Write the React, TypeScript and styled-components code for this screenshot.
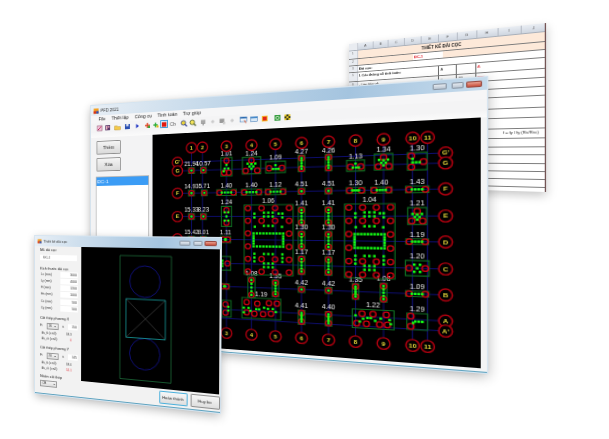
import React from "react";
import styled, { createGlobalStyle } from "styled-components";

type Pt = [number, number];

// panes are laid out at twice their on-screen size, then zoomed by half and tilted
const ZOOM = 0.5;

const makeQuad = (w: number, h: number, [p0, p1, p2, p3]: Pt[]) => {
  const dx1 = p1[0] - p2[0], dx2 = p3[0] - p2[0], sx = p0[0] - p1[0] + p2[0] - p3[0];
  const dy1 = p1[1] - p2[1], dy2 = p3[1] - p2[1], sy = p0[1] - p1[1] + p2[1] - p3[1];
  const den = dx1 * dy2 - dx2 * dy1;
  const g = (sx * dy2 - dx2 * sy) / den, k = (dx1 * sy - sx * dy1) / den;
  const a = p1[0] - p0[0] + g * p1[0], b = p3[0] - p0[0] + k * p3[0], c = p0[0];
  const d = p1[1] - p0[1] + g * p1[1], e = p3[1] - p0[1] + k * p3[1], f = p0[1];
  const mw = w * ZOOM, mh = h * ZOOM;
  const matrix = `matrix3d(${[a / mw, d / mw, 0, g / mw, b / mh, e / mh, 0, k / mh, 0, 0, 1, 0, c, f, 0, 1].join(",")})`;
  const unproject = (X: number, Y: number): Pt => {
    const uu = (e - f * k) * X + (c * k - b) * Y + (b * f - c * e);
    const vv = (f * g - d) * X + (a - c * g) * Y + (c * d - a * f);
    const ww = (d * k - e * g) * X + (b * g - a * k) * Y + (a * e - b * d);
    return [(uu / ww) * w, (vv / ww) * h];
  };
  return { matrix, unproject };
};

const sheetQuad = makeQuad(400, 340, [[349, 44], [546, 23], [546, 192], [349, 186]]);
const mainQuad = makeQuad(800, 560, [[91, 106], [487, 77], [487, 373], [91, 342]]);
const dialogQuad = makeQuad(400, 340, [[35, 236], [221, 238], [220, 413], [35, 393]]);

const GlobalStyle = createGlobalStyle`
  html, body { margin: 0; background: #fff; }
  body { font-family: "Liberation Sans", Arial, sans-serif; }
`;

const Stage = styled.div`
  position: relative;
  width: 609px;
  height: 439px;
  overflow: hidden;
  background: #fff;
`;

const Tilt = styled.div`
  position: absolute;
  left: 0;
  top: 0;
  transform-origin: 0 0;
`;

const Pane = styled.div<{ $w: number; $h: number }>`
  zoom: ${ZOOM};
  width: ${(p) => p.$w}px;
  height: ${(p) => p.$h}px;
  box-sizing: border-box;
  display: flex;
  flex-direction: column;
`;

/* spreadsheet */
const SheetPane = styled(Pane)`
  background: #fff;
  box-shadow: 0 8px 18px rgba(0, 0, 0, 0.22);
  border-right: 1.5px solid #6b4a4a;
  font-size: 8px;
  color: #222;
  overflow: hidden;
`;
const SheetRow = styled.div<{ $h: number; $bg?: string }>`
  display: flex;
  height: ${(p) => p.$h}px;
  flex: none;
  background: ${(p) => p.$bg || "transparent"};
  border-bottom: 1.6px solid #7c7c7c;
  box-sizing: border-box;
`;
const HeaderRow = styled.div`
  display: flex;
  height: 15px;
  flex: none;
  background: linear-gradient(#e9edf3, #cfd6e0);
  border-bottom: 1px solid #a9b0ba;
`;
const RowHead = styled.div`
  width: 19px;
  flex: none;
  background: #e9ecf1;
  border-right: 1px solid #c2c6d0;
  color: #666;
  font-size: 7px;
  text-align: center;
  line-height: 14px;
`;
const ColHead = styled.div<{ $w: number }>`
  width: ${(p) => p.$w}px;
  flex: none;
  text-align: center;
  color: #555;
  font-size: 8px;
  line-height: 15px;
  border-right: 1px solid #b6bcc6;
  box-sizing: border-box;
`;
const Cell = styled.div<{ $w: number; $red?: boolean; $bold?: boolean; $line?: boolean }>`
  width: ${(p) => p.$w}px;
  flex: none;
  padding-left: 3px;
  box-sizing: border-box;
  white-space: nowrap;
  line-height: 14px;
  color: ${(p) => (p.$red ? "#e0101a" : "#222")};
  font-weight: ${(p) => (p.$bold ? 700 : 400)};
  border-right: ${(p) => (p.$line ? "1px solid #666" : "none")};
  background: ${(p) => (p.$red && p.$bold ? "#fff" : "transparent")};
`;
const SheetTitle = styled.div`
  flex: 1;
  text-align: center;
  font-weight: 700;
  font-size: 9px;
  line-height: 19px;
  padding-right: 10px;
`;

const Sheet = () => {
  const cols = [37, 34, 36, 36, 36, 37, 38, 40, 42, 45];
  const letters = "ABCDEFGHIJ".split("");
  return (
    <Tilt style={{ transform: sheetQuad.matrix }}>
      <SheetPane $w={400} $h={340}>
        <HeaderRow>
          <RowHead />
          {letters.map((l, i) => (
            <ColHead key={l} $w={cols[i]}>{l}</ColHead>
          ))}
        </HeaderRow>
        <SheetRow $h={20} $bg="#fde9d9">
          <RowHead>1</RowHead>
          <SheetTitle>THIẾT KẾ ĐÀI CỌC</SheetTitle>
        </SheetRow>
        <SheetRow $h={16} $bg="#fde9d9">
          <RowHead>2</RowHead>
          <Cell $w={124} />
          <Cell $w={62} $red $bold>ĐC-1</Cell>
        </SheetRow>
        <SheetRow $h={17}>
          <RowHead>3</RowHead>
          <Cell $w={140} $bold>Đài cọc:</Cell>
        </SheetRow>
        <SheetRow $h={22}>
          <RowHead>5</RowHead>
          <Cell $w={179} $bold $line>I. Các thông số tính toán:</Cell>
          <Cell $w={36} $line> A</Cell>
          <Cell $w={37} $line />
          <Cell $w={38} $red>A</Cell>
        </SheetRow>
        <SheetRow $h={18}>
          <RowHead>6</RowHead>
          <Cell $w={179} $line> - Lớp bảo vệ</Cell>
          <Cell $w={36} $line> a</Cell>
          <Cell $w={37} $line>30</Cell>
          <Cell $w={38} $red>mm</Cell>
        </SheetRow>
        <SheetRow $h={18}>
          <RowHead>7</RowHead>
          <Cell $w={179}> - Kiểm tra cường độ bê tông</Cell>
        </SheetRow>
        {[18, 24, 20, 22].map((h, i) => (
          <SheetRow key={i} $h={h}>
            <RowHead />
          </SheetRow>
        ))}
        <SheetRow $h={20}>
          <RowHead />
          <Cell $w={300} />
          <Cell $w={81}>f = fy / fy (Rs/Rsc)</Cell>
        </SheetRow>
        {[18, 16, 17, 16, 17, 16, 17, 16].map((h, i) => (
          <SheetRow key={i} $h={h}>
            <RowHead />
          </SheetRow>
        ))}
      </SheetPane>
    </Tilt>
  );
};

/* main window */
const Win = styled(Pane)`
  background: #f3f4f5;
  outline: 2px solid #d5e4f0;
  border-bottom: 3px solid #5fa3bf;
  box-shadow: 0 6px 22px rgba(0, 0, 0, 0.32), 0 0 4px rgba(0, 0, 0, 0.25);
`;
const TitleBar = styled.div<{ $h: number }>`
  height: ${(p) => p.$h}px;
  flex: none;
  display: flex;
  align-items: center;
  padding: 0 8px 0 6px;
  gap: 4px;
  background: linear-gradient(100deg, #e8eff6 0%, #c5d9ea 35%, #a4c4df 70%, #c6dbec 100%);
  color: #333;
`;
const TitleText = styled.span<{ $size: number }>`
  font-size: ${(p) => p.$size}px;
  flex: 1;
`;
const CaptionBtn = styled.div<{ $w: number; $h: number; $close?: boolean; $mr?: number }>`
  width: ${(p) => p.$w}px;
  height: ${(p) => p.$h}px;
  flex: none;
  box-sizing: border-box;
  margin-right: ${(p) => p.$mr || 0}px;
  border: 1px solid ${(p) => (p.$close ? "#9a4a40" : "#8a96a4")};
  border-radius: 2px;
  background: ${(p) =>
    p.$close ? "linear-gradient(#e8a090, #c9503c)" : "linear-gradient(#e4e9ef, #b9c5d2)"};
`;
const MenuBar = styled.div`
  height: 18px;
  flex: none;
  display: flex;
  background: #f6f6f7;
`;
const MenuItem = styled.div`
  width: 56px;
  font-size: 11px;
  line-height: 18px;
  text-align: center;
  color: #222;
  white-space: nowrap;
  &:first-child {
    margin-right: -12px;
  }
`;
const ToolBar = styled.div`
  height: 22px;
  flex: none;
  display: flex;
  align-items: center;
  padding-left: 12px;
  background: #f4f4f5;
`;
const Spacer = styled.div`
  height: 12px;
  flex: none;
  background: linear-gradient(#f5f5f6, #fbfbfb);
`;
const Tool = styled.div<{ $x: number; $on?: boolean }>`
  width: 18px;
  height: 18px;
  flex: none;
  margin-left: ${(p) => p.$x}px;
  box-sizing: border-box;
  display: flex;
  align-items: center;
  justify-content: center;
  font-size: 11px;
  color: #555;
  border: ${(p) => (p.$on ? "1px solid #3d9ad8" : "none")};
  background: ${(p) => (p.$on ? "#d6ecfa" : "transparent")};
`;
const Body = styled.div`
  display: flex;
  flex: 1;
  min-height: 0;
`;
const LeftPanel = styled.div`
  width: 149px;
  flex: none;
  display: flex;
  flex-direction: column;
  align-items: flex-start;
  padding: 8px 0 8px 11px;
  box-sizing: border-box;
  gap: 8px;
  background: #f3f3f4;
`;
const PushBtn = styled.div`
  width: 60px;
  height: 32px;
  margin-left: 3px;
  box-sizing: border-box;
  border: 1px solid #8f8f8f;
  border-radius: 2px;
  background: linear-gradient(#f4f4f4, #dadada);
  font-size: 11px;
  line-height: 30px;
  text-align: center;
  color: #222;
`;
const ListBox = styled.div`
  width: 127px;
  flex: 1;
  margin-top: 4px;
  background: #fff;
  border: 1px solid #b8b8b8;
`;
const ListItem = styled.div`
  background: #3b9cf5;
  color: #e9f4ff;
  font-size: 12px;
  line-height: 20px;
  padding-left: 3px;
`;
const CadWrap = styled.div`
  width: 641px;
  height: 475px;
  flex: none;
  background: #000;
`;
const CadSvg = styled.svg`
  display: block;
  width: 100%;
  height: 100%;
  font-family: "Liberation Sans", Arial, sans-serif;
`;

const Ico = ({ c }: { c: React.ReactNode }) => (
  <svg width="16" height="16" viewBox="0 0 16 16">{c}</svg>
);
const toolIcons: { x: number; on?: boolean; t?: string; c?: React.ReactNode }[] = [
  { x: 0, c: <><rect x="2" y="2" width="12" height="12" fill="#f2c6d8" stroke="#7a2d57" /><path d="M4 12 L12 4" stroke="#b01050" strokeWidth="2" /></> },
  { x: 3, c: <><rect x="2" y="2" width="12" height="12" fill="#5a3a6a" /><path d="M4 4h3v8H4zM9 4h3v4H9z" fill="#f3b0c0" /></> },
  { x: 6, c: <><path d="M1 5h6l1 2h7v7H1z" fill="#f4c94a" stroke="#b58a1a" /></> },
  { x: 5, c: <><rect x="2" y="2" width="12" height="12" fill="#2a4fb0" /><rect x="5" y="2" width="6" height="5" fill="#dfe6f5" /></> },
  { x: 6, c: <path d="M5 3 L12 8 L5 13 Z" fill="#2237c4" /> },
  { x: 6, c: <><path d="M8 2v12M2 8h12" stroke="#e23b1a" strokeWidth="3" /><rect x="9" y="9" width="5" height="5" fill="#2fae3a" /></> },
  { x: 3, c: <><path d="M7 3v10M2 8h10" stroke="#2fae3a" strokeWidth="3" /><rect x="9" y="9" width="5" height="5" fill="#e2b91a" /></> },
  { x: 0, on: true, c: <rect x="2" y="2" width="12" height="12" fill="#e21a10" /> },
  { x: 3, t: "Cb" },
  { x: 6, c: <><circle cx="7" cy="7" r="5" fill="#e8d23a" stroke="#2b3a90" strokeWidth="1.6" /><path d="M10 10l5 5" stroke="#2b3a90" strokeWidth="2.4" /></> },
  { x: 2, c: <><circle cx="7" cy="7" r="5" fill="#f3e25a" stroke="#4a5a20" strokeWidth="1.6" /><path d="M10 10l5 5" stroke="#4a5a20" strokeWidth="2.4" /></> },
  { x: 6, c: <><rect x="2" y="3" width="10" height="9" fill="#a8a8a8" /><path d="M7 11v4" stroke="#777" strokeWidth="2" /></> },
  { x: 2, c: <path d="M8 4v8M4 8h8" stroke="#b5b5b5" strokeWidth="1.6" /> },
  { x: 2, c: <><rect x="3" y="3" width="10" height="9" fill="#9a9a9a" /><rect x="10" y="10" width="5" height="5" fill="#c8c8c8" /></> },
  { x: 4, c: <path d="M8 4v8M4 8h8" stroke="#b5b5b5" strokeWidth="1.6" /> },
  { x: 7, c: <><rect x="1" y="2" width="14" height="10" fill="#eaf3fb" stroke="#2a6ab0" /><rect x="1" y="2" width="14" height="3" fill="#2a6ab0" /><path d="M10 9l3 6" stroke="#d64a20" strokeWidth="2" /></> },
  { x: 3, c: <><rect x="1" y="3" width="14" height="10" fill="#d8e8f6" stroke="#2a6ab0" /><rect x="1" y="3" width="14" height="3" fill="#3d84c8" /></> },
  { x: 4, c: <><rect x="2" y="2" width="12" height="12" fill="#f6c02a" /><rect x="4" y="4" width="8" height="8" fill="#e0241a" /></> },
  { x: 9, c: <><rect x="2" y="2" width="12" height="12" fill="#2f9a3a" /><circle cx="8" cy="8" r="3.4" fill="none" stroke="#e8f5e0" strokeWidth="1.6" /></> },
  { x: 2, c: <><rect x="2" y="2" width="12" height="12" fill="#3a3a18" /><path d="M2 2h4v4H2zM10 2h4v4h-4zM6 6h4v4H6zM2 10h4v4H2zM10 10h4v4h-4z" fill="#e8c92a" /></> },
];

/* CAD drawing, measured in screen pixels and brought back to window coordinates */
const un = mainQuad.unproject;
const colScreen: Pt[] = [[191, 147], [202, 147], [226, 146], [251, 145], [275, 144], [301, 143], [328, 142], [355, 141], [383, 140], [412, 139], [427, 138]];
const colX = colScreen.map((p) => un(p[0], p[1])[0]);
const rowScreen: Record<string, number> = { Gp: 153, G: 163, F: 189, E: 216, D: 242, C: 269, B: 295, A: 321, Ap: 331 };
const rowY: Record<string, number> = {};
Object.keys(rowScreen).forEach((k) => (rowY[k] = un(444, rowScreen[k])[1]));
const topY = un(301, 143)[1];
const botY = un(301, 338)[1];
const leftX = un(177, 216)[0];
const rightX = un(445, 216)[0];

const rowLabels: [string, string][] = [["Gp", "G'"], ["G", "G"], ["F", "F"], ["E", "E"], ["D", "D"], ["C", "C"], ["B", "B"], ["A", "A"], ["Ap", "A'"]];

const Bubble = ({ x, y, t }: { x: number; y: number; t: string }) => (
  <g>
    <circle cx={x} cy={y} r={11.5} fill="#000" stroke="#b0000f" strokeWidth={2.8} />
    <text x={x} y={y + 4} fontSize={12} fontWeight={700} fill="#ecdc3c" textAnchor="middle">{t}</text>
  </g>
);

type Cap = {
  c: number;
  r: string;
  w: number;
  h: number;
  dx?: number;
  dy?: number;
  t: string;
  piles: Pt[];
  dots: Pt[];
  big?: boolean;
};
const vLine = (n: number, span: number, x = 0): Pt[] =>
  Array.from({ length: n }, (_, i) => [x, -span + (2 * span * i) / Math.max(n - 1, 1)] as Pt);
const hLine = (n: number, span: number, y = 0): Pt[] =>
  Array.from({ length: n }, (_, i) => [-span + (2 * span * i) / Math.max(n - 1, 1), y] as Pt);

const small = (c: number, r: string, t: string, dx = 0): Cap => ({ c, r, t, w: 13, h: 13, dx, piles: [[0, 0]], dots: [[0, 0]] });
const vert = (c: number, r: string, t: string, h = 38, w = 13, dy = 0): Cap => ({
  c, r, t, w, h, dy,
  piles: [[0, -h / 2 + 6], [0, h / 2 - 6]],
  dots: vLine(5, h / 2 - 6),
});
const horz = (c: number, r: string, t: string, w = 40, dx = 0, h = 13): Cap => ({
  c, r, t, w, h, dx,
  piles: [[-w / 2 + 6, 0], [w / 2 - 6, 0]],
  dots: hLine(4, w / 2 - 11),
});
const tri = (c: number, r: string, t: string, w: number, h: number, dx = 0, dy = 0): Cap => ({
  c, r, t, w, h, dx, dy,
  piles: [[0, -h / 2 + 7], [-w / 2 + 7, h / 2 - 7], [w / 2 - 7, h / 2 - 7]],
  dots: [[-4, 2], [4, 2], [0, 7], [-8, -4], [8, -4], [0, -3]],
});
const rect2 = (c: number, r: string, t: string, w: number, h: number, dx = 0, dy = 0): Cap => ({
  c, r, t, w, h, dx, dy,
  piles: [[-w / 2 + 7, 2], [w / 2 - 7, 2]],
  dots: [[-5, 4], [1, 4], [6, 4], [0, -4]],
});
const bigCap = (c: number, t: string, wide: number, dx: number): Cap => {
  const xs = [-wide, -wide * 0.33, wide * 0.33, wide];
  const piles: Pt[] = [];
  [-68, -41, 41, 68].forEach((y) => xs.forEach((x) => piles.push([x, y])));
  [-14, 14].forEach((y) => { piles.push([-wide, y]); piles.push([wide, y]); });
  const dots: Pt[] = [
    ...hLine(10, wide * 0.72, -14), ...hLine(10, wide * 0.72, 14),
    ...vLine(4, 8, -wide * 0.72), ...vLine(4, 8, wide * 0.72),
    ...hLine(3, 9, -58), ...hLine(3, 9, -50), ...hLine(3, 9, -30),
    ...hLine(3, 9, 58), ...hLine(3, 9, 50), ...hLine(3, 9, 30),
    [-wide * 0.68, -56], [-wide * 0.68, -48], [wide * 0.68, -56], [wide * 0.68, -48], [wide * 0.5, -56],
    [-wide * 0.68, 30], [-wide * 0.68, 38], [-wide * 0.68, 46], [wide * 0.68, 30], [wide * 0.68, 38], [wide * 0.68, 46],
    [-wide * 0.66, -28], [wide * 0.66, -28],
  ];
  return { c, r: "D", t, w: wide * 2 + 16, h: 150, dx, dy: 0, piles, dots, big: true };
};

const caps: Cap[] = [
  small(0, "G", "21.94"), small(1, "G", "10.57", 2),
  small(0, "F", "14.93"), small(1, "F", "5.71", 4),
  small(0, "E", "15.33"), small(1, "E", "8.23", 2),
  small(0, "D", "15.42"), small(1, "D", "8.01", 2),
  { ...tri(2, "G", "1.01", 24, 40, 0, -6), dots: [[-4, 4], [4, 4], [0, -4], [-6, 10]] },
  tri(3, "G", "1.24", 38, 36, 0, -7),
  rect2(4, "G", "1.09", 40, 24, 0, -2),
  vert(5, "G", "4.27", 34, 13, -8), vert(6, "G", "4.26", 34, 12, -8),
  rect2(7, "G", "1.13", 33, 22),
  tri(8, "G", "1.34", 33, 32, 0, -6),
  { ...tri(9, "G", "1.30", 34, 34, 8, -5), piles: [[-10, -11], [-10, 11], [11, 1]], dots: [[-8, 2], [-2, 2], [4, 2], [-8, -5]] },
  horz(2, "F", "1.40", 42), horz(3, "F", "1.40", 42), horz(4, "F", "1.12", 42),
  small(5, "F", "4.51"), small(6, "F", "4.51"),
  horz(7, "F", "1.30", 34, 0, 12), horz(8, "F", "1.40", 38, -4, 12), horz(9, "F", "1.43", 40, 8, 13),
  { ...vert(2, "E", "1.24", 44, 22), dots: [[-4, -9], [4, -9], [0, 0], [-4, 9], [4, 9]], piles: [[0, -14], [0, 14]] },
  vert(5, "E", "1.41"), vert(6, "E", "1.41"),
  tri(9, "E", "1.21", 33, 33, 8),
  horz(2, "D", "1.11", 22, -2, 14),
  vert(5, "D", "1.30"), vert(6, "D", "1.30"),
  horz(9, "D", "1.19", 39, 8, 11),
  { ...rect2(2, "C", "", 24, 30, -3), piles: [[5, 0]], dots: [[-6, 0], [-6, -6], [-6, 6]] },
  vert(5, "C", "1.17"), vert(6, "C", "1.17"),
  { ...rect2(9, "C", "1.20", 41, 30, 8), piles: [[-14, 0], [14, 0]], dots: [[-5, -7], [5, -7], [0, 0], [-5, 7], [5, 7]] },
  horz(2, "B", "", 20, -4, 12),
  vert(3, "B", "1.08", 44, 15), vert(4, "B", "1.35", 36), small(5, "B", "4.42"), small(6, "B", "4.42"),
  vert(7, "B", "1.35", 32, 12), vert(8, "B", "1.08", 38, 12), horz(9, "B", "1.09", 40, 8, 11),
  { ...vert(2, "A", "", 36, 20, -2), piles: [[-2, -9], [-2, 9]], dots: [[4, -4], [4, 4]] },
  {
    c: 3, r: "A", t: "1.19", w: 80, h: 44, dx: 20, dy: -6,
    piles: [[-30, -12], [-30, 10], [-14, 12], [-8, -10], [4, 12], [16, -12], [20, 10], [32, -12]],
    dots: [[-36, 0], [-26, 0], [-22, 6], [-10, 2], [-4, 2], [6, -2], [14, 0], [24, 0], [30, 6], [-36, 10]],
  },
  vert(5, "A", "4.41", 30, 13, 8), vert(6, "A", "4.40", 30, 12, 8),
  {
    c: 7, r: "A", t: "1.22", w: 76, h: 38, dx: 32, dy: 4,
    piles: [[-20, -10], [-12, 10], [0, -10], [12, 10], [24, -10], [-30, 10], [26, 10]],
    dots: [[-32, -6], [-18, 0], [-10, -2], [-4, -2], [4, 3], [14, -2], [30, 0], [32, 8], [-24, 6]],
  },
  { ...tri(9, "A", "1.29", 36, 32, 8, 4), piles: [[-11, 10], [-11, -10]], dots: [[-3, 0], [3, 0], [9, 0], [-7, 3]] },
  bigCap(3, "1.06", 42, 10),
  bigCap(7, "1.04", 38, 0),
];

const CapShape = ({ cap }: { cap: Cap }) => {
  const cx = cap.big ? (colX[cap.c] + colX[cap.c + 1]) / 2 + (cap.dx || 0) : colX[cap.c] + (cap.dx || 0);
  const cy = rowY[cap.r] + (cap.dy || 0);
  return (
    <g>
      <rect x={cx - cap.w / 2} y={cy - cap.h / 2} width={cap.w} height={cap.h} fill="none" stroke="#0e6a20" strokeWidth={2.2} />
      {cap.piles.map((p, i) => (
        <circle key={i} cx={cx + p[0]} cy={cy + p[1]} r={5.5} fill="none" stroke="#cc0010" strokeWidth={2.6} />
      ))}
      {cap.dots.map((p, i) => (
        <rect key={i} x={cx + p[0] - 2.4} y={cy + p[1] - 2.4} width={4.8} height={4.8} fill="#14ff14" />
      ))}
      {cap.t && (
        <text x={cx} y={cy - cap.h / 2 - 4} fontSize={13} fill="#f0f0f0" textAnchor="middle">{cap.t}</text>
      )}
    </g>
  );
};

const CadDrawing = () => (
  <CadSvg viewBox="149 76 641 475" preserveAspectRatio="none">
    {colX.map((x, i) => (
      <line key={i} x1={x} x2={x} y1={topY + 12} y2={botY - 12} stroke="#10107e" strokeWidth={1.8} />
    ))}
    {rowLabels.map(([k]) => (
      <line key={k} x1={leftX + 12} x2={rightX - 12} y1={rowY[k]} y2={rowY[k]} stroke="#10107e" strokeWidth={1.8} />
    ))}
    {caps.map((cap, i) => (
      <CapShape key={i} cap={cap} />
    ))}
    {colX.map((x, i) => (
      <Bubble key={i} x={x} y={topY} t={String(i + 1)} />
    ))}
    {colX.slice(2).map((x, i) => (
      <Bubble key={i} x={x} y={botY} t={String(i + 3)} />
    ))}
    {rowLabels.map(([k, t]) => (
      <g key={k}>
        <Bubble x={leftX} y={rowY[k]} t={t} />
        <Bubble x={rightX} y={rowY[k]} t={t} />
      </g>
    ))}
  </CadSvg>
);

const AppIcon = ({ size }: { size: number }) => (
  <svg width={size} height={size} viewBox="0 0 16 16" style={{ flex: "none" }}>
    <rect x="1" y="1" width="14" height="14" fill="#f5a020" />
    <rect x="1" y="8" width="7" height="7" fill="#d8301c" />
    <rect x="8" y="8" width="7" height="7" fill="#2a50c0" />
  </svg>
);

const MainWindow = () => (
  <Tilt style={{ transform: mainQuad.matrix }}>
    <Win $w={800} $h={560}>
      <TitleBar $h={24}>
        <AppIcon size={14} />
        <TitleText $size={10}>PFD 2021</TitleText>
        <CaptionBtn $w={24} $h={13} $mr={4} />
        <CaptionBtn $w={20} $h={13} />
        <CaptionBtn $w={26} $h={13} $close />
      </TitleBar>
      <MenuBar>
        {["File", "Thiết lập", "Công cụ", "Tính toán", "Trợ giúp"].map((m) => (
          <MenuItem key={m}>{m}</MenuItem>
        ))}
      </MenuBar>
      <ToolBar>
        {toolIcons.map((t, i) => (
          <Tool key={i} $x={t.x} $on={t.on}>{t.t || <Ico c={t.c} />}</Tool>
        ))}
      </ToolBar>
      <Spacer />
      <Body>
        <LeftPanel>
          <PushBtn>Thêm</PushBtn>
          <PushBtn>Xóa</PushBtn>
          <ListBox>
            <ListItem>ĐC-1</ListItem>
          </ListBox>
        </LeftPanel>
        <CadWrap>
          <CadDrawing />
        </CadWrap>
      </Body>
    </Win>
  </Tilt>
);

/* design dialog */
const DialogWin = styled(Win)`
  background: #f2f2f2;
  box-shadow: 0 6px 20px rgba(0, 0, 0, 0.3), 0 0 3px rgba(0, 0, 0, 0.3);
`;
const FormCol = styled.div`
  width: 108px;
  flex: none;
  padding: 3px 8px 0 12px;
  box-sizing: border-box;
  display: flex;
  flex-direction: column;
  font-size: 8px;
  color: #333;
`;
const RightCol = styled.div`
  flex: 1;
  min-width: 0;
  display: flex;
  flex-direction: column;
`;
const GroupLabel = styled.div<{ $top?: number }>`
  margin-top: ${(p) => p.$top || 0}px;
  font-size: 8px;
  line-height: 11px;
  color: #222;
  white-space: nowrap;
`;
const TextField = styled.div<{ $w?: number; $left?: boolean }>`
  width: ${(p) => (p.$w ? `${p.$w}px` : "auto")};
  height: 12px;
  background: #fff;
  font-size: 7px;
  line-height: 12px;
  text-align: ${(p) => (p.$left ? "left" : "right")};
  padding: ${(p) => (p.$left ? "0 0 0 8px" : "0 2px 0 0")};
  margin: ${(p) => (p.$left ? "5px 2px 0 0" : "0")};
  color: #333;
`;
const FieldRow = styled.div<{ $combo?: boolean }>`
  display: flex;
  align-items: center;
  justify-content: space-between;
  height: ${(p) => (p.$combo ? 18 : 14.5)}px;
  margin-top: ${(p) => (p.$combo ? 2 : 0)}px;
  font-size: 7px;
  padding-left: ${(p) => (p.$combo ? 0 : 2)}px;
  white-space: nowrap;
`;
const Combo = styled.div<{ $w: number; $top?: number }>`
  width: ${(p) => p.$w}px;
  height: 14px;
  margin-top: ${(p) => p.$top || 0}px;
  flex: none;
  box-sizing: border-box;
  border: 1px solid #9a9a9a;
  background: linear-gradient(#f4f4f4, #dcdcdc);
  display: flex;
  align-items: center;
  justify-content: space-between;
  font-size: 7px;
  padding: 0 3px;
`;
const Arrow = styled.span`
  width: 0;
  height: 0;
  border-left: 2.5px solid transparent;
  border-right: 2.5px solid transparent;
  border-top: 3px solid #222;
`;
const ValueRow = styled.div<{ $red?: boolean; $top?: number }>`
  display: flex;
  justify-content: space-between;
  margin-top: ${(p) => p.$top || 0}px;
  padding: 0 14px 0 4px;
  height: 11px;
  font-size: 6.5px;
  line-height: 11px;
  color: #333;
  white-space: nowrap;
  span:last-child {
    color: ${(p) => (p.$red ? "#e0303a" : "#333")};
  }
`;
const Footer = styled.div`
  flex: 1;
  display: flex;
  justify-content: flex-end;
  align-items: center;
  gap: 6px;
  padding-right: 1px;
`;
const DlgBtn = styled.div<{ $on?: boolean }>`
  width: 58px;
  height: 25px;
  box-sizing: border-box;
  border: 1px solid ${(p) => (p.$on ? "#4ab0dc" : "#8f8f8f")};
  border-radius: 2px;
  background: linear-gradient(#f7f7f7, #dedede);
  font-size: 8.5px;
  line-height: 23px;
  text-align: center;
  color: #222;
`;
const DlgCanvas = styled.svg`
  display: block;
  width: 290px;
  height: 282px;
  flex: none;
  background: #000;
`;

const fieldRows = [["Lx (mm)", "3000"], ["Ly (mm)", "4000"], ["H (mm)", "1200"], ["Hn (mm)", "1000"], ["Cx (mm)", "500"], ["Cy (mm)", "500"]];

const Dialog = () => (
  <Tilt style={{ transform: dialogQuad.matrix }}>
    <DialogWin $w={400} $h={340}>
      <TitleBar $h={21}>
        <AppIcon size={10} />
        <TitleText $size={8}>Thiết kế đài cọc</TitleText>
        <CaptionBtn $w={22} $h={10} $mr={2} />
        <CaptionBtn $w={18} $h={10} />
        <CaptionBtn $w={24} $h={10} $close />
      </TitleBar>
      <Body>
        <FormCol>
          <GroupLabel>Mã đài cọc:</GroupLabel>
          <TextField $left>ĐC-1</TextField>
          <GroupLabel $top={11}>Kích thước đài cọc</GroupLabel>
          {fieldRows.map(([l, v]) => (
            <FieldRow key={l}>
              {l}
              <TextField $w={38}>{v}</TextField>
            </FieldRow>
          ))}
          <GroupLabel $top={9}>Cốt thép phương X</GroupLabel>
          <FieldRow $combo>
            Fi <Combo $w={28}>16<Arrow /></Combo> a <TextField $w={20}>150</TextField>
          </FieldRow>
          <ValueRow $top={3}><span>As_tk (cm2):</span><span>18.3</span></ValueRow>
          <ValueRow $red><span>As_ch (cm2):</span><span>0</span></ValueRow>
          <GroupLabel $top={8}>Cốt thép phương Y</GroupLabel>
          <FieldRow $combo>
            Fi <Combo $w={28}>20<Arrow /></Combo> a <TextField $w={20}>145</TextField>
          </FieldRow>
          <ValueRow $top={3}><span>As_tk (cm2):</span><span>18.0</span></ValueRow>
          <ValueRow $red><span>As_ch (cm2):</span><span>52.1</span></ValueRow>
          <GroupLabel $top={5}>Nhóm cốt thép</GroupLabel>
          <Combo $w={40} $top={3}>CB<Arrow /></Combo>
        </FormCol>
        <RightCol>
          <DlgCanvas viewBox="2 0 290 282">
            <rect x="88" y="16" width="108" height="253" fill="none" stroke="#1c6a38" strokeWidth="1.6" />
            <circle cx="141" cy="68" r="32" fill="none" stroke="#1616a8" strokeWidth="1.4" />
            <circle cx="141" cy="215" r="32" fill="none" stroke="#1616a8" strokeWidth="1.4" />
            <path d="M101 104 L184 183 M184 104 L101 183" stroke="#6a6a6a" strokeWidth="0.9" />
            <rect x="101" y="104" width="83" height="79" fill="none" stroke="#18a0a0" strokeWidth="1.6" />
          </DlgCanvas>
          <Footer>
            <DlgBtn $on>Hoàn thành</DlgBtn>
            <DlgBtn>Hủy bỏ</DlgBtn>
          </Footer>
        </RightCol>
      </Body>
    </DialogWin>
  </Tilt>
);

export default function App() {
  return (
    <Stage>
      <GlobalStyle />
      <Sheet />
      <MainWindow />
      <Dialog />
    </Stage>
  );
}
